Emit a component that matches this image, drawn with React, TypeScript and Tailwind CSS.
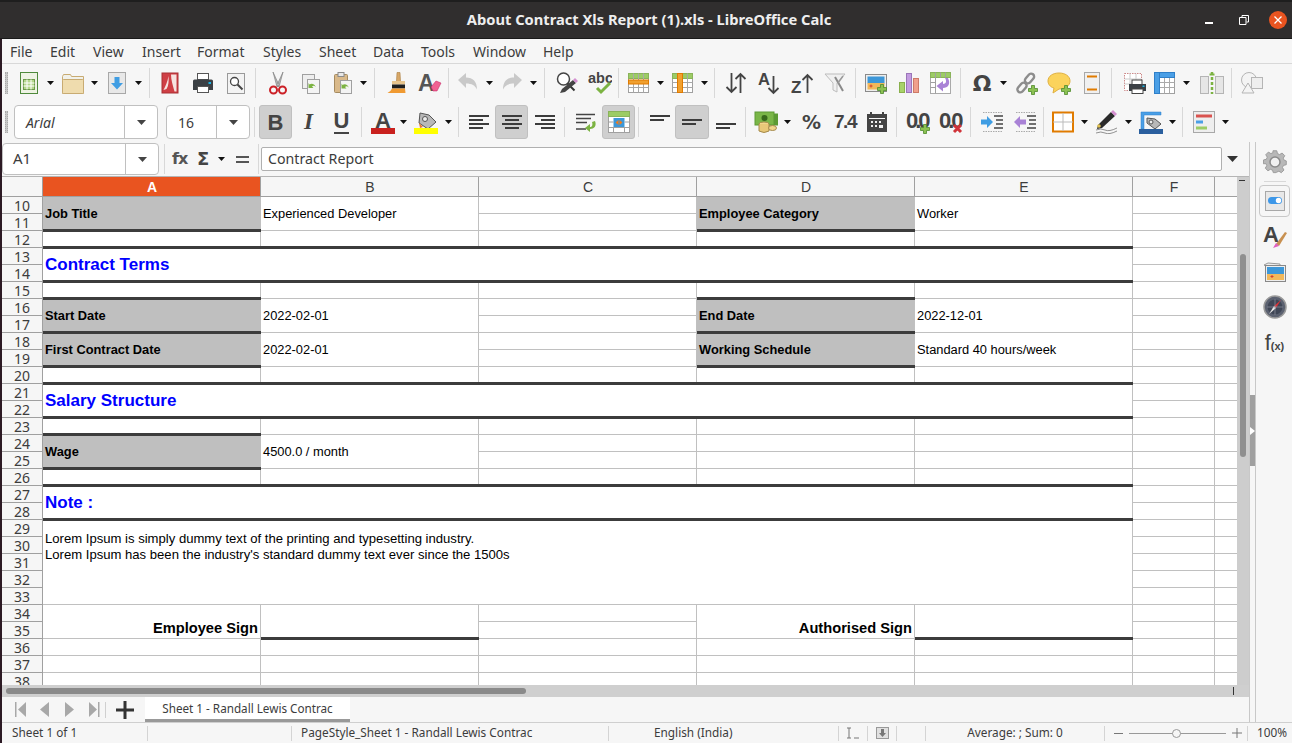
import type { ReactNode } from "react";

const LINE = "border-[#c0c0c0]";
const DARK = "#3c3c3c";

const Ico = ({ children, w = 24, h = 24 }: { children: ReactNode; w?: number; h?: number }) => (
  <svg width={w} height={h} viewBox={`0 0 ${w} ${h}`} className="shrink-0">
    {children}
  </svg>
);

const Plus = ({ x = 14, y = 14 }: { x?: number; y?: number }) => (
  <path
    transform={`translate(${x} ${y})`}
    d="M3.5 .5h3v3h3v3h-3v3h-3v-3h-3v-3h3z"
    fill="#8cc152"
    stroke="#4f8a2c"
    strokeWidth=".8"
  />
);

const GreenTable = ({ hl }: { hl?: "row" | "col" }) => (
  <>
    <rect x="1.5" y="2.5" width="20" height="19" fill="#fff" stroke="#a0a0a0" />
    <rect x="1.5" y="2.5" width="20" height="5" fill="#9ccc65" stroke="#8ab35a" />
    <path d="M1.5 11.5h20M1.5 16.5h20M6.5 2.5v19M11.5 2.5v19M16.5 2.5v19" stroke="#a8a8a8" fill="none" />
    {hl === "row" && <rect x="1.5" y="9" width="20" height="4" fill="#f0a030" stroke="#e07b00" />}
    {hl === "col" && <rect x="6.5" y="2.5" width="5" height="19" fill="#f0a030" stroke="#e07b00" />}
  </>
);

const Icons: Record<string, ReactNode> = {
  new: (
    <Ico>
      <rect x="3.5" y="1.5" width="17" height="21" fill="#eef3e4" stroke="#4f8a3c" />
      <rect x="6.5" y="8.5" width="11" height="10" fill="#b4d68c" stroke="#6c9a4a" />
      <path d="M6.5 12h11M6.5 15h11M10 8.5v10M14 8.5v10" stroke="#fff" fill="none" />
    </Ico>
  ),
  open: (
    <Ico>
      <path d="M1.5 5.5l1-2h7l1 2h12v17h-21z" fill="#f1f1ea" stroke="#c8ab72" />
      <rect x="1.5" y="8.5" width="21" height="14" rx="1" fill="#efdcae" stroke="#c8ab72" />
    </Ico>
  ),
  save: (
    <Ico>
      <rect x="3.5" y="1.5" width="17" height="21" fill="#e8e8e8" stroke="#a8a8a8" />
      <path d="M9.5 6h5v6h3.500L12 18.500 6 12h3.500z" fill="#3f9de3" />
    </Ico>
  ),
  pdf: (
    <Ico>
      <rect x="4" y="2" width="16" height="20" fill="#cf3f45" stroke="#a83034" />
      <path d="M13 3.500h5.500v17h-2C15 15 13 9 13 3.500zM5.500 19c2-4 4-8 5-14 .5 5 0 10-2 13z" fill="#f6e3e0" />
    </Ico>
  ),
  print: (
    <Ico>
      <rect x="6.500" y="2.500" width="11" height="6" fill="#fff" stroke="#555" />
      <path d="M3.500 8.500h17q1.500 0 1.500 1.500v9h-20v-9q0-1.500 1.500-1.500z" fill="#3b4045" />
      <rect x="6.500" y="15.500" width="11" height="6" fill="#fff" stroke="#555" />
      <rect x="17.500" y="11" width="2.500" height="2" fill="#19b5e8" />
    </Ico>
  ),
  preview: (
    <Ico>
      <rect x="3.500" y="2.500" width="17" height="20" fill="#f3f3f3" stroke="#9a9a9a" />
      <circle cx="10.500" cy="10.500" r="4" fill="#fff" stroke="#444" strokeWidth="1.300" />
      <path d="M13.500 13.500l5 5" stroke="#444" strokeWidth="2" />
    </Ico>
  ),
  cut: (
    <Ico>
      <path d="M7 1l6 13-2 2zM17 1L11 14l2 2z" fill="#b8b8b8" stroke="#777" strokeWidth=".6" />
      <circle cx="7.500" cy="19" r="3.500" fill="none" stroke="#cc2127" strokeWidth="2" />
      <circle cx="16.500" cy="19" r="3.500" fill="none" stroke="#cc2127" strokeWidth="2" />
    </Ico>
  ),
  copy: (
    <Ico>
      <rect x="3.500" y="3.500" width="12" height="14" fill="#eee" stroke="#a0a0a0" />
      <rect x="8.500" y="8.500" width="12" height="14" fill="#f4f4f4" stroke="#a0a0a0" />
      <path d="M16.500 15.500a4 4 0 0 0-6-2l-1-1.500v5h5l-1.500-1.500a2.500 2.500 0 0 1 3.500.5z" fill="#7cb342" />
    </Ico>
  ),
  paste: (
    <Ico>
      <rect x="3.500" y="3.500" width="13" height="18" rx="1" fill="#d9b98a" stroke="#a58a5f" />
      <rect x="7" y="1.500" width="6" height="4" fill="#e8e8e8" stroke="#8a8a8a" />
      <rect x="9.500" y="9.500" width="11" height="13" fill="#f4f4f4" stroke="#a0a0a0" />
      <path d="M17.500 16a4 4 0 0 0-6-2l-1-1.500v5h5l-1.500-1.500a2.500 2.500 0 0 1 3.500.5z" fill="#7cb342" />
    </Ico>
  ),
  brush: (
    <Ico>
      <path d="M12 1.500h3l.5 9h-4z" fill="#d8a868" stroke="#a87a3c" strokeWidth=".6" />
      <rect x="7" y="10" width="13" height="3.500" fill="#e8c48c" />
      <rect x="7" y="13.500" width="13" height="4" fill="#1f1f1f" />
      <path d="M7 17.500h13l.5 4.500h-18q3-1 4.500-4.500z" fill="#f09a32" />
    </Ico>
  ),
  clear: (
    <Ico>
      <text x="0" y="20" fontFamily="Liberation Sans" fontWeight="700" fontSize="23" fill="#555">A</text>
      <path d="M13 16l5-6 5 2-4 8h-4z" fill="#f06292" stroke="#c2185b" strokeWidth=".5" />
    </Ico>
  ),
  undo: (
    <Ico>
      <path d="M2 9l8-7v4.500c7 0 11 4 11 12-2-4-5-6-11-6V17z" fill="#c9c9c9" />
    </Ico>
  ),
  redo: (
    <Ico>
      <path d="M22 9l-8-7v4.500c-7 0-11 4-11 12 2-4 5-6 11-6V17z" fill="#c9c9c9" />
    </Ico>
  ),
  find: (
    <Ico>
      <circle cx="8.500" cy="8" r="6" fill="#fff" stroke="#444" strokeWidth="1.500" />
      <path d="M12.500 12.500l7 7" stroke="#333" strokeWidth="2" />
      <path d="M5 22l2-4 11-9 3 3-11 9z" fill="#444" />
      <path d="M18 9l2-2 3 3-2 2z" fill="#d48fd0" />
    </Ico>
  ),
  spell: (
    <Ico>
      <text x="0" y="12" fontFamily="Liberation Sans" fontWeight="700" fontSize="14.500" fill="#444">abc</text>
      <path d="M9 17l4 4 9-9" fill="none" stroke="#7cb342" strokeWidth="3" />
    </Ico>
  ),
  rowT: <Ico><GreenTable hl="row" /></Ico>,
  colT: <Ico><GreenTable hl="col" /></Ico>,
  sort: (
    <Ico>
      <path d="M7.500 2v19M2.500 16l5 5 5-5M16.500 22V3M11.500 8l5-5 5 5" fill="none" stroke="#444" strokeWidth="1.800" />
    </Ico>
  ),
  sortA: (
    <Ico>
      <text x="0" y="14" fontFamily="Liberation Sans" fontWeight="700" fontSize="16.500" fill="#444">A</text>
      <path d="M15.500 5v17M10.500 17l5 5 5-5" fill="none" stroke="#444" strokeWidth="1.800" />
    </Ico>
  ),
  sortZ: (
    <Ico>
      <text x="0" y="22" fontFamily="Liberation Sans" fontWeight="700" fontSize="17" fill="#444">Z</text>
      <path d="M16.500 22V4M11.500 9l5-5 5 5" fill="none" stroke="#444" strokeWidth="1.800" />
    </Ico>
  ),
  filter: (
    <Ico>
      <path d="M2 3h20l-8 9v9l-4-2v-7z" fill="#f0f0f0" stroke="#bdbdbd" />
      <path d="M12 6l8 14" stroke="#8a8a8a" strokeWidth="2" />
      <path d="M20 5l-5 7" stroke="#9a9a9a" strokeWidth="1.500" />
    </Ico>
  ),
  image: (
    <Ico>
      <rect x="1.500" y="3.500" width="21" height="17" fill="#eee" stroke="#8a8a8a" />
      <rect x="3.500" y="5.500" width="17" height="7" fill="#3d97d8" />
      <rect x="3.500" y="12" width="17" height="6.500" fill="#f2b85a" />
      <path d="M7 13.500v3M5.500 15h3" stroke="#d6402c" />
      <Plus x={13} y={13} />
    </Ico>
  ),
  chart: (
    <Ico>
      <rect x="2.500" y="11.500" width="5" height="10" fill="#a8d26a" stroke="#8ab04c" />
      <rect x="9.500" y="2.500" width="5" height="19" fill="#c39be0" stroke="#9a76b8" />
      <rect x="16.500" y="7.500" width="5" height="14" fill="#f0a08c" stroke="#cc7a68" />
    </Ico>
  ),
  pivot: (
    <Ico>
      <rect x="1.500" y="1.500" width="20" height="21" fill="#fff" stroke="#aaa" />
      <rect x="1.500" y="1.500" width="20" height="5" fill="#9ccc65" stroke="#8ab35a" />
      <path d="M6.500 1.500v21M1.500 11.500h5M1.500 16.500h5M11.500 1.500v5M16.500 1.500v5" stroke="#a0a0a0" />
      <path d="M19 7c3 6 0 10-5 10v3.500L7.500 15 14 10v3c3 0 4-3 2-6z" fill="#a982d6" />
    </Ico>
  ),
  omega: (
    <Ico>
      <text x="12" y="20" textAnchor="middle" fontFamily="DejaVu Sans" fontWeight="700" fontSize="22" fill="#444">Ω</text>
    </Ico>
  ),
  link: (
    <Ico>
      <g fill="none" stroke="#8d8d8d" strokeWidth="2.400">
        <rect x="12.500" y="2" width="6" height="11" rx="3" transform="rotate(40 15.500 7.500)" />
        <rect x="5" y="11" width="6" height="11" rx="3" transform="rotate(40 8 16.500)" />
      </g>
      <Plus x={14} y={14} />
    </Ico>
  ),
  comment: (
    <Ico>
      <path d="M12 2c6 0 11 3 11 8 0 5-5 8-11 8l-6 4 1-5c-4-1-6-4-6-7 0-5 5-8 11-8z" fill="#fbd35c" stroke="#e0b040" />
      <Plus x={14} y={14} />
    </Ico>
  ),
  header: (
    <Ico>
      <rect x="4.500" y="1.500" width="15" height="21" fill="#f0f0f0" stroke="#a8a8a8" />
      <rect x="7" y="4.500" width="10" height="2" fill="#e07b00" />
      <rect x="7" y="17.500" width="10" height="2" fill="#e07b00" />
    </Ico>
  ),
  printArea: (
    <Ico>
      <rect x="1.500" y="2.500" width="17" height="17" fill="#fff" stroke="#c88" strokeDasharray="1.500 1" />
      <path d="M1.500 8h17M1.500 13h17M7 2.500v17M13 2.500v17" stroke="#ccc" />
      <rect x="9" y="9" width="10" height="5" fill="#fff" stroke="#444" />
      <rect x="6" y="13" width="17" height="7" fill="#3b4045" />
      <rect x="9" y="18" width="11" height="4.500" fill="#fff" stroke="#444" />
      <rect x="19.500" y="14.500" width="2" height="1.500" fill="#19b5e8" />
    </Ico>
  ),
  freeze: (
    <Ico>
      <rect x="1.500" y="1.500" width="20" height="21" fill="#fff" stroke="#a0a0a0" />
      <path d="M11.500 6.500v16M16.500 6.500v16M6.500 11.500h15M6.500 16.500h15" stroke="#aaa" />
      <rect x="1.500" y="1.500" width="20" height="5" fill="#4a9fe6" stroke="#2f7fc8" />
      <rect x="1.500" y="1.500" width="5" height="21" fill="#4a9fe6" stroke="#2f7fc8" />
    </Ico>
  ),
  split: (
    <Ico>
      <rect x=".5" y="5.500" width="8" height="17" fill="#e6e6e6" stroke="#b5b5b5" />
      <rect x="15.500" y="5.500" width="8" height="17" fill="#e6e6e6" stroke="#b5b5b5" />
      <path d="M12 1v22" stroke="#7cb342" strokeWidth="2.500" strokeDasharray="3 2" />
      <path d="M9.500 3.500h5" stroke="#7cb342" strokeWidth="2" />
    </Ico>
  ),
  shapes: (
    <Ico>
      <circle cx="9" cy="9" r="7.500" fill="#f4f4f4" stroke="#b5b5b5" />
      <rect x="11.500" y="6.500" width="11" height="11" fill="#eee" stroke="#b5b5b5" />
      <path d="M8 12l6 10H2z" fill="#f4f4f4" stroke="#b5b5b5" />
    </Ico>
  ),
  fontColor: (
    <Ico>
      <text x="12" y="18" textAnchor="middle" fontFamily="Liberation Sans" fontWeight="700" fontSize="22" fill="#444">A</text>
      <rect x="0" y="18" width="24" height="6" fill="#c9211e" />
    </Ico>
  ),
  highlight: (
    <Ico>
      <path d="M6 3l9 2 7 7-8 7-9-6z" fill="#b8b8b8" stroke="#555" />
      <circle cx="11" cy="9" r="2.500" fill="#eee" stroke="#555" />
      <path d="M5 13l4 4-3 1z" fill="#e8762c" />
      <rect x="0" y="18" width="24" height="6" fill="#ffff00" />
    </Ico>
  ),
  wrap: (
    <Ico>
      <path d="M2 4.500h19M2 8.500h15M2 12.500h11M2 19h10" stroke="#444" strokeWidth="1.600" />
      <path d="M21 11c2 5-1 8-5 8v3l-5-4 5-4v3c2 0 3-2 2-5z" fill="#7cb342" />
    </Ico>
  ),
  merge: (
    <Ico>
      <rect x="1.500" y="1.500" width="21" height="21" fill="#fff" stroke="#a0a0a0" />
      <rect x="1.500" y="1.500" width="21" height="5" fill="#9ccc65" stroke="#8ab35a" />
      <rect x="6.500" y="8" width="11" height="9" fill="#3d97d8" />
      <path d="M11.500 10v5l-3-2.500zM12.500 10v5l3-2.500z" fill="#f07c1c" />
      <path d="M1.500 12h5M17.500 12h5M1.500 17.500h21M6.500 17.500v5M17.500 17.500v5" stroke="#a0a0a0" />
    </Ico>
  ),
  money: (
    <Ico>
      <rect x="6" y="3.500" width="18" height="12" fill="#5c9a34" />
      <rect x="1" y="2" width="19" height="13" fill="#7ab648" stroke="#5c9a34" />
      <circle cx="10.500" cy="8" r="3" fill="#38691c" />
      <ellipse cx="10" cy="14" rx="5" ry="2" fill="#f1d58c" stroke="#a58a4c" />
      <path d="M5 14v7q5 3 10 0v-7" fill="#e8c878" stroke="#a58a4c" />
      <ellipse cx="18.500" cy="18" rx="4" ry="2.500" fill="#f1d58c" stroke="#a58a4c" />
    </Ico>
  ),
  date: (
    <Ico>
      <rect x="2" y="4" width="20" height="18" fill="#444" />
      <rect x="5" y="2" width="2" height="3" fill="#444" />
      <rect x="17" y="2" width="2" height="3" fill="#444" />
      <rect x="4" y="8" width="16" height="1" fill="#f6f6f6" />
      <path d="M6 11h2v2H6zM10 11h2v2h-2zM14 11h2v2h-2zM14 15h4v3h-4zM6 15h2v2H6zM10 15h2v2h-2z" fill="#f0f0f0" />
    </Ico>
  ),
  addDec: (
    <Ico>
      <text x="0" y="18" fontFamily="Liberation Sans" fontWeight="700" fontSize="22" letterSpacing="-3" fill="#444">0.0</text>
      <Plus x={14} y={14} />
    </Ico>
  ),
  delDec: (
    <Ico>
      <text x="0" y="18" fontFamily="Liberation Sans" fontWeight="700" fontSize="22" letterSpacing="-3" fill="#444">0.0</text>
      <path d="M15 15l7 7M22 15l-7 7" stroke="#d0343a" strokeWidth="3" />
    </Ico>
  ),
  indent: (
    <Ico>
      <path d="M14 6h9M16 10h7M16 14h7M14 18h9" stroke="#444" strokeWidth="1.500" />
      <path d="M3 2.500h20M3 21.500h20" stroke="#aaa" strokeDasharray="1.500 1" />
      <path d="M1 9.500h6V6l6 6-6 6v-3.500H1z" fill="#3f9de3" />
    </Ico>
  ),
  outdent: (
    <Ico>
      <path d="M14 6h9M16 10h7M16 14h7M14 18h9" stroke="#444" strokeWidth="1.500" />
      <path d="M3 2.500h20M3 21.500h20" stroke="#aaa" strokeDasharray="1.500 1" />
      <path d="M13 9.500H7V6l-6 6 6 6v-3.500h6z" fill="#a982d6" />
    </Ico>
  ),
  borders: (
    <Ico>
      <rect x="2" y="2.500" width="20" height="19" fill="#fff" stroke="#e07b00" strokeWidth="2" />
      <path d="M12 3v18M2 12h20" stroke="#bbb" />
    </Ico>
  ),
  lineStyle: (
    <Ico>
      <path d="M3 15L16 2l4 4L7 18l-5 1z" fill="#2a2a2a" />
      <path d="M16 2l2-2 4 4-2 2z" fill="#d48fd0" />
      <circle cx="4" cy="16" r="1.800" fill="#e0c050" />
      <path d="M1 20q5-2 9 0t12-2M1 23q5-2 9 0t12-2" fill="none" stroke="#777" strokeWidth=".8" />
    </Ico>
  ),
  borderColor: (
    <Ico>
      <path d="M2 19V2h20v3H5v14z" fill="#4a9fe6" stroke="#2f7fc8" strokeWidth=".5" />
      <path d="M8 8l8 1 6 5-6 5-8-6z" fill="#b8b8b8" stroke="#555" />
      <circle cx="12" cy="12" r="2" fill="#eee" stroke="#555" />
      <rect x="0" y="19" width="24" height="5" fill="#2a5f9e" />
    </Ico>
  ),
  cond: (
    <Ico>
      <rect x="1.500" y="1.500" width="21" height="21" fill="#eee" stroke="#a8a8a8" />
      <rect x="4" y="4.500" width="16" height="3" fill="#d9534f" />
      <rect x="4" y="10.500" width="7" height="3" fill="#4a9fe6" />
      <rect x="4" y="16.500" width="11" height="3" fill="#9ccc65" />
    </Ico>
  ),
};

const AlignH = ({ kind }: { kind: "l" | "c" | "r" }) => {
  const rows: [number, number][] =
    kind === "l"
      ? [[2, 20], [2, 14], [2, 20], [2, 14]]
      : kind === "c"
        ? [[2, 20], [5, 14], [2, 20], [5, 14]]
        : [[2, 20], [8, 14], [2, 20], [8, 14]];
  return (
    <Ico>
      {rows.map(([x, w], i) => (
        <rect key={i} x={x} y={5 + i * 4} width={w} height="2" fill={DARK} />
      ))}
    </Ico>
  );
};

const AlignV = ({ y }: { y: number }) => (
  <Ico>
    <rect x="2" y={y} width="20" height="2" fill={DARK} />
    <rect x="2" y={y + 4} width="14" height="2" fill={DARK} />
  </Ico>
);

const Arrow = ({ cls = "w-[11px]" }: { cls?: string }) => (
  <div className={`${cls} flex shrink-0 justify-center`}>
    <svg width="7" height="4" viewBox="0 0 7 4">
      <path d="M0 0h7L3.500 4z" fill="#111" />
    </svg>
  </div>
);

const Sep = ({ cls = "mx-[3px]" }: { cls?: string }) => <div className={`${cls} h-[30px] w-px shrink-0 bg-[#d8d8d8]`} />;

const Btn = ({ children, active, cls = "w-[33px]" }: { children: ReactNode; active?: boolean; cls?: string }) => (
  <div
    className={`${cls} flex h-[34px] shrink-0 items-center justify-center rounded-[3px] ${
      active ? "border border-[#c0c0c0] bg-[#cfcfcf]" : ""
    }`}
  >
    {children}
  </div>
);

const Grip = () => (
  <div className="ml-[3px] h-[22px] w-[3px] shrink-0 border-x border-dotted border-[#a8a8a8] bg-[#c8c8c8]" />
);

const Combo = ({ text, cls, italic }: { text: string; cls: string; italic?: boolean }) => (
  <div className={`${cls} flex h-[34px] shrink-0 rounded-[4px] border border-[#c0c0c0] bg-white`}>
    <div className={`flex flex-1 items-center text-[14px] text-[#3c3c3c] ${italic ? "pl-[11px] italic" : "pl-[11px]"}`}>
      {text}
    </div>
    <div className="flex w-[33px] items-center justify-center border-l border-[#c0c0c0]">
      <svg width="9" height="5" viewBox="0 0 9 5">
        <path d="M0 0h9L4.500 5z" fill="#444" />
      </svg>
    </div>
  </div>
);

const Toolbar1 = () => (
  <div className="flex h-[38px] items-center">
    <Grip />
    <div className="w-[4px] shrink-0" />
    <Btn>{Icons.new}</Btn>
    <Arrow />
    <Btn>{Icons.open}</Btn>
    <Arrow />
    <Btn>{Icons.save}</Btn>
    <Arrow />
    <Sep cls="ml-[5px] mr-[3px]" />
    <Btn>{Icons.pdf}</Btn>
    <Btn>{Icons.print}</Btn>
    <Btn>{Icons.preview}</Btn>
    <Sep cls="ml-[3px] mr-[5px]" />
    <Btn>{Icons.cut}</Btn>
    <Btn>{Icons.copy}</Btn>
    <Btn cls="w-[31px]">{Icons.paste}</Btn>
    <Arrow />
    <Sep cls="mx-[5px]" />
    <Btn cls="w-[33px]">{Icons.brush}</Btn>
    <Btn cls="w-[33px]">{Icons.clear}</Btn>
    <Sep cls="ml-[2px] mr-[3px]" />
    <Btn cls="w-[32px]">{Icons.undo}</Btn>
    <Arrow />
    <Btn>{Icons.redo}</Btn>
    <Arrow />
    <Sep cls="mx-[5px]" />
    <Btn>{Icons.find}</Btn>
    <Btn>{Icons.spell}</Btn>
    <Sep cls="ml-[2px] mr-[3px]" />
    <Btn>{Icons.rowT}</Btn>
    <Arrow />
    <Btn>{Icons.colT}</Btn>
    <Arrow />
    <Sep cls="ml-[4px] mr-[3px]" />
    <Btn cls="w-[35px]">{Icons.sort}</Btn>
    <Btn>{Icons.sortA}</Btn>
    <Btn>{Icons.sortZ}</Btn>
    <Btn cls="w-[32px]">{Icons.filter}</Btn>
    <Sep cls="ml-[4px] mr-[3px]" />
    <Btn>{Icons.image}</Btn>
    <Btn>{Icons.chart}</Btn>
    <Btn cls="w-[32px]">{Icons.pivot}</Btn>
    <Sep cls="ml-[3px] mr-[5px]" />
    <Btn cls="w-[32px]">{Icons.omega}</Btn>
    <Arrow />
    <Btn>{Icons.link}</Btn>
    <Btn>{Icons.comment}</Btn>
    <Btn>{Icons.header}</Btn>
    <Sep cls="ml-[3px] mr-[5px]" />
    <Btn cls="w-[35px]">{Icons.printArea}</Btn>
    <Btn cls="w-[26px]">{Icons.freeze}</Btn>
    <Arrow cls="w-[17px]" />
    <Btn cls="w-[33px]">{Icons.split}</Btn>
    <Sep cls="mx-[3px]" />
    <Btn>{Icons.shapes}</Btn>
  </div>
);

const Toolbar2 = () => (
  <div className="flex h-[40px] items-center">
    <Grip />
    <div className="w-[6px] shrink-0" />
    <Combo text="Arial" cls="w-[144px]" italic />
    <div className="w-[8px] shrink-0" />
    <Combo text="16" cls="w-[84px]" />
    <Sep cls="mx-[4px]" />
    <Btn active>
      <span className="font-['Liberation_Sans'] text-[22px] font-bold text-[#444]">B</span>
    </Btn>
    <Btn cls="w-[33px]">
      <span className="font-['Liberation_Serif'] text-[23px] font-bold italic text-[#444]">I</span>
    </Btn>
    <Btn>
      <span className="border-b-[2px] border-[#444] font-['Liberation_Sans'] text-[22px] leading-[22px] font-bold text-[#444]">
        U
      </span>
    </Btn>
    <Sep cls="ml-[3px] mr-[5px]" />
    <Btn cls="w-[31px]">{Icons.fontColor}</Btn>
    <Arrow />
    <Btn cls="w-[34px]">{Icons.highlight}</Btn>
    <Arrow />
    <Sep cls="ml-[4px] mr-[3px]" />
    <Btn>
      <AlignH kind="l" />
    </Btn>
    <Btn active>
      <AlignH kind="c" />
    </Btn>
    <Btn>
      <AlignH kind="r" />
    </Btn>
    <Sep cls="ml-[3px] mr-[5px]" />
    <Btn cls="w-[32px]">{Icons.wrap}</Btn>
    <Btn active>{Icons.merge}</Btn>
    <Sep cls="ml-[3px] mr-[5px]" />
    <Btn cls="w-[31px]">
      <AlignV y={5} />
    </Btn>
    <Btn active cls="w-[34px]">
      <AlignV y={9} />
    </Btn>
    <Btn>
      <AlignV y={13} />
    </Btn>
    <Sep cls="ml-[3px] mr-[4px]" />
    <Btn cls="w-[32px]">{Icons.money}</Btn>
    <Arrow />
    <Btn cls="w-[36px]">
      <span className="font-['DejaVu_Sans'] text-[19px] font-bold tracking-[-1px] text-[#444]">%</span>
    </Btn>
    <Btn cls="w-[32px]">
      <span className="font-['Liberation_Sans'] text-[19px] font-bold tracking-[-1.500px] text-[#444]">7.4</span>
    </Btn>
    <Btn cls="w-[32px]">{Icons.date}</Btn>
    <Sep cls="ml-[3px] mr-[4px]" />
    <Btn>{Icons.addDec}</Btn>
    <Btn>{Icons.delDec}</Btn>
    <Sep cls="ml-[3px] mr-[4px]" />
    <Btn>{Icons.indent}</Btn>
    <Btn>{Icons.outdent}</Btn>
    <Sep cls="mx-[2px]" />
    <Btn>{Icons.borders}</Btn>
    <Arrow />
    <Btn>{Icons.lineStyle}</Btn>
    <Arrow />
    <Btn>{Icons.borderColor}</Btn>
    <Arrow />
    <Sep cls="mx-[4px]" />
    <Btn>{Icons.cond}</Btn>
    <Arrow />
  </div>
);

const FormulaBar = () => (
  <div className="flex h-[35px] shrink-0 items-center border-b border-[#b5b5b5]">
    <div className="flex h-[32px] w-[157px] shrink-0 rounded-[4px] border border-[#c0c0c0] bg-white">
      <div className="flex flex-1 items-center pl-[10px] pb-[1px] text-[15px] text-[#3c3c3c]">A1</div>
      <div className="flex w-[33px] items-center justify-center border-l border-[#c0c0c0]">
        <svg width="9" height="5" viewBox="0 0 9 5">
          <path d="M0 0h9L4.500 5z" fill="#444" />
        </svg>
      </div>
    </div>
    <Sep cls="ml-[5px] mr-[7px]" />
    <span className="w-[18px] font-['DejaVu_Sans'] text-[16px] font-bold tracking-[-1px] text-[#555]">fx</span>
    <span className="ml-[7px] w-[12px] font-['DejaVu_Sans'] text-[18px] leading-none font-bold text-[#444]">Σ</span>
    <Arrow cls="ml-[7px] w-[10px]" />
    <div className="ml-[10px] w-[13px] space-y-[3px]">
      <div className="h-[2px] bg-[#555]" />
      <div className="h-[2px] bg-[#555]" />
    </div>
    <Sep cls="ml-[9px] mr-[2px]" />
    <div className="flex h-[24px] w-[961px] items-center rounded-[2px] border border-[#b0b0b0] bg-white pb-[1px] pl-[6px] text-[14.200px] text-[#3c3c3c]">
      Contract Report
    </div>
    <div className="flex w-[20px] justify-center">
      <svg width="11" height="6" viewBox="0 0 11 6">
        <path d="M0 0h11L5.500 6z" fill="#333" />
      </svg>
    </div>
  </div>
);

type CellDef = { c?: string; t?: ReactNode; k?: "label" | "head" | "plain" | "sign" | "note"; thick?: boolean };

const kinds: Record<string, string> = {
  label: "items-center bg-[#bfbfbf] pl-[2px] font-bold",
  head: "items-center pl-[2px] text-[17px] font-bold text-[#0000ff]",
  plain: "items-center pl-[2px]",
  sign: "items-end justify-end pr-[2px] pb-[2px] text-[14.670px] leading-[16px] font-bold",
  note: "items-start pt-[11px] pl-[2px] text-[13.100px] leading-[16px]",
};

const Cell = ({ c = "", t, k = "plain", thick }: CellDef) => (
  <div className={`relative flex border-r border-b ${LINE} ${kinds[k]} ${c}`}>
    {t && <div>{t}</div>}
    {thick && <div className="absolute right-[-1px] bottom-[-2px] left-0 z-10 h-[3px] bg-[#3c3c3c]" />}
  </div>
);

const two = "row-span-2";
const five = "col-span-5 row-span-2";

const empties = (thickAll = false): CellDef[] => Array.from({ length: 5 }, () => ({ thick: thickAll }));

// rows 10 to 38, only what differs from an empty row is written out
const rowDefs: Record<number, CellDef[]> = {
  10: [
    { c: two, k: "label", t: "Job Title", thick: true },
    { c: two, t: "Experienced Developer" },
    {},
    { c: two, k: "label", t: "Employee Category", thick: true },
    { c: two, t: "Worker" },
  ],
  11: [{}],
  12: empties(true),
  13: [{ c: five, k: "head", t: "Contract Terms", thick: true }],
  14: [],
  15: [{ thick: true }, {}, {}, { thick: true }, {}],
  16: [
    { c: two, k: "label", t: "Start Date", thick: true },
    { c: two, t: "2022-02-01" },
    {},
    { c: two, k: "label", t: "End Date", thick: true },
    { c: two, t: "2022-12-01" },
  ],
  17: [{}],
  18: [
    { c: two, k: "label", t: "First Contract Date", thick: true },
    { c: two, t: "2022-02-01" },
    {},
    { c: two, k: "label", t: "Working Schedule", thick: true },
    { c: two, t: "Standard 40 hours/week" },
  ],
  19: [{}],
  20: empties(true),
  21: [{ c: five, k: "head", t: "Salary Structure", thick: true }],
  22: [],
  23: [{ thick: true }, {}, {}, {}, {}],
  24: [{ c: two, k: "label", t: "Wage", thick: true }, { c: two, t: "4500.0 / month" }, {}, {}, {}],
  25: [{}, {}, {}],
  26: empties(true),
  27: [{ c: five, k: "head", t: "Note :", thick: true }],
  28: [],
  29: [
    {
      c: "col-span-5 row-span-5",
      k: "note",
      t: (
        <>
          Lorem Ipsum is simply dummy text of the printing and typesetting industry.
          <br />
          Lorem Ipsum has been the industry's standard dummy text ever since the 1500s
        </>
      ),
    },
  ],
  30: [],
  31: [],
  32: [],
  33: [],
  34: [
    { c: two, k: "sign", t: "Employee Sign" },
    { c: two, thick: true },
    {},
    { c: two, k: "sign", t: "Authorised Sign" },
    { c: two, thick: true },
  ],
  35: [{}],
};

const ColHead = ({ t, active }: { t: string; active?: boolean }) => (
  <div
    className={`flex items-center justify-center border-r border-b border-[#a0a0a0] pt-[1px] pl-[1px] text-[14px] ${
      active ? "bg-[#e95420] font-bold text-white" : "bg-[#f6f6f6] text-[#3c3c3c]"
    }`}
  >
    {t}
  </div>
);

const Row = ({ n }: { n: number }) => {
  const cells = rowDefs[n] ?? empties();
  return (
    <>
      <div className="flex items-center justify-center border-r border-b border-[#a0a0a0] bg-[#f6f6f6] pt-[2px] font-['Noto_Sans'] text-[14px] leading-none text-[#3c3c3c]">
        {n}
      </div>
      {cells.map((d, i) => (
        <Cell key={i} {...d} />
      ))}
      <Cell />
      <Cell c="border-r-0" />
    </>
  );
};

const Sheet = () => {
  const rows = Array.from({ length: 29 }, (_, i) => i + 10);
  return (
    <div className="grid flex-1 grid-cols-[41px_repeat(5,218px)_82px_23px] grid-rows-[20px_repeat(29,17px)] overflow-hidden bg-white font-['Liberation_Sans'] text-[12.850px] text-black">
      <div className="border-r border-b border-[#a0a0a0] bg-[#f6f6f6]" />
      {["A", "B", "C", "D", "E", "F", ""].map((c) => (
        <ColHead key={c} t={c} active={c === "A"} />
      ))}
      {rows.map((n) => (
        <Row key={n} n={n} />
      ))}
    </div>
  );
};

const NavTri = ({ dir, bar }: { dir: "l" | "r"; bar?: boolean }) => (
  <svg width="12" height="15" viewBox="0 0 12 15" className="shrink-0">
    {dir === "l" ? <path d={bar ? "M11 0v15L3 7.500z" : "M10 0v15L1 7.500z"} fill="#a8a8a8" /> : <path d={bar ? "M1 0v15l8-7.500z" : "M2 0v15l9-7.500z"} fill="#a8a8a8" />}
    {bar && <rect x={dir === "l" ? 0 : 10} y="0" width="1.500" height="15" fill="#a8a8a8" />}
  </svg>
);

const Tabs = () => (
  <div className="flex h-[25px] items-center">
    <div className="flex w-[143px] items-center pl-[13px]">
      <NavTri dir="l" bar />
      <div className="w-[12px]" />
      <NavTri dir="l" />
      <div className="w-[12px]" />
      <NavTri dir="r" />
      <div className="w-[13px]" />
      <NavTri dir="r" bar />
      <div className="ml-[5px] h-[16px] w-px bg-[#d0d0d0]" />
      <svg width="18" height="18" viewBox="0 0 18 18" className="ml-[10px] shrink-0">
        <path d="M7.500 0h3v7.500H18v3h-7.500V18h-3v-7.500H0v-3h7.500z" fill="#333" />
      </svg>
    </div>
    <div className="flex h-[25px] w-[205px] items-center justify-center border-b-[3px] border-[#999] bg-white pt-[1px] text-[11.700px] text-[#3c3c3c]">
      Sheet 1 - Randall Lewis Contrac
    </div>
  </div>
);

const StatCell = ({ cls, children }: { cls: string; children?: ReactNode }) => (
  <div className={`${cls} flex h-[15px] shrink-0 items-center border-r border-[#d4d4d4]`}>{children}</div>
);

const StatusBar = () => (
  <div className="flex h-[21px] shrink-0 items-center border-t border-[#cfcfcf] text-[11.800px] text-[#3c3c3c]">
    <StatCell cls="w-[146px] pl-[10px]">Sheet 1 of 1</StatCell>
    <StatCell cls="w-[144px]" />
    <StatCell cls="w-[317px] pl-[9px]">PageStyle_Sheet 1 - Randall Lewis Contrac</StatCell>
    <StatCell cls="w-[230px] pl-[45px]">English (India)</StatCell>
    <StatCell cls="w-[29px] justify-center">
      <svg width="14" height="12" viewBox="0 0 14 12">
        <path d="M1 1h4M1 11h4M3 1v10M8 11h5" stroke="#777" fill="none" />
      </svg>
    </StatCell>
    <StatCell cls="w-[29px] justify-center">
      <svg width="13" height="12" viewBox="0 0 13 12">
        <rect x=".5" y=".5" width="12" height="11" fill="#e0e0e0" stroke="#999" />
        <path d="M5 2h3v4h2l-3.500 4L3 6h2z" fill="#777" />
      </svg>
    </StatCell>
    <StatCell cls="w-[29px]" />
    <StatCell cls="w-[179px] justify-center">Average: ; Sum: 0</StatCell>
    <StatCell cls="w-[143px] gap-[6px] pl-[9px]">
      <div className="h-px w-[9px] bg-[#777]" />
      <div className="relative h-px w-[97px] bg-[#999]">
        <div className="absolute top-[-4px] left-[43px] h-[9px] w-[9px] rounded-full border border-[#999] bg-[#f6f6f6]" />
      </div>
      <svg width="10" height="10" viewBox="0 0 10 10">
        <path d="M0 5h10M5 0v10" stroke="#777" />
      </svg>
    </StatCell>
    <div className="pl-[9px]">100%</div>
  </div>
);

const Sidebar = () => (
  <div className="flex w-[37px] shrink-0 flex-col items-center pt-[8px]">
    <svg width="24" height="24" viewBox="0 0 24 24">
      <path
        d="M10 1h4l.7 3 2.300 1 2.600-1.600 2.800 2.800L20.800 8.800l1 2.200 2.200.7v4l-3 .7-1 2.300 1.600 2.600-2.800 2.800-2.600-1.600-2.200 1L13.300 24h-3l-.7-2.500-2.300-1-2.600 1.600-2.800-2.800 1.600-2.600-1-2.200L0 14.700v-4l3-.7 1-2.300L2.400 5.200l2.800-2.800 2.600 1.600 2.200-1z"
        transform="scale(.95) translate(.5 -.2)"
        fill="#b8b8b8"
        stroke="#9a9a9a"
      />
      <circle cx="12" cy="12" r="5" fill="#f0f0f0" stroke="#8a8a8a" strokeWidth="1.500" />
    </svg>
    <div className="mt-[7px] h-px w-[22px] bg-[#d8d8d8]" />
    <div className="mt-[3px] flex h-[32px] w-[31px] items-center justify-center rounded-[4px] border border-[#c8c8c8]">
      <svg width="20" height="20" viewBox="0 0 20 20">
        <rect x=".5" y=".5" width="19" height="19" fill="#e8e8e8" stroke="#a8a8a8" />
        <rect x="3" y="6" width="14" height="7" rx="3.500" fill="#3d97e8" />
        <circle cx="13.500" cy="9.500" r="2.700" fill="#fff" />
      </svg>
    </div>
    <svg width="24" height="24" viewBox="0 0 24 24" className="mt-[7px]">
      <text x="0" y="18" fontFamily="Liberation Sans" fontWeight="700" fontSize="22" fill="#444">A</text>
      <path d="M13 20l9-12 2 1-8 13z" fill="#c89050" />
      <path d="M10 24l3-5 3 3z" fill="#e060c0" />
    </svg>
    <svg width="24" height="24" viewBox="0 0 24 24" className="mt-[12px]">
      <path d="M1 5l4-2 12 1v2L4 7z" fill="#eee" stroke="#999" />
      <rect x="2.500" y="5.500" width="20" height="16" fill="#eee" stroke="#888" />
      <rect x="4" y="7" width="17" height="7" fill="#3d97d8" />
      <rect x="4" y="14" width="17" height="6" fill="#f2b85a" />
      <path d="M9 15v3M7.500 16.500h3" stroke="#d6402c" />
    </svg>
    <svg width="24" height="24" viewBox="0 0 24 24" className="mt-[11px]">
      <circle cx="12" cy="12" r="11" fill="#5b6170" stroke="#9a9a9a" strokeWidth="1.500" />
      <circle cx="12" cy="12" r="7.500" fill="#3f4656" />
      <path d="M18 5l-5 8-2-2z" fill="#d8343a" />
      <path d="M6 19l5-8 2 2z" fill="#e8e8e8" />
      <path d="M4 12h16M12 4v16" stroke="#9aa0ac" strokeWidth=".6" />
    </svg>
    <div className="mt-[13px] flex h-[24px] items-baseline font-['Liberation_Sans'] text-[#444]">
      <span className="text-[22px] leading-none">f</span>
      <span className="text-[11px] leading-none font-bold">(x)</span>
    </div>
  </div>
);

export default function App() {
  const menu: [string, string][] = [
    ["File", "w-[40px]"],
    ["Edit", "w-[43px]"],
    ["View", "w-[49px]"],
    ["Insert", "w-[55px]"],
    ["Format", "w-[66px]"],
    ["Styles", "w-[56px]"],
    ["Sheet", "w-[54px]"],
    ["Data", "w-[48px]"],
    ["Tools", "w-[52px]"],
    ["Window", "w-[70px]"],
    ["Help", "w-[50px]"],
  ];
  return (
    <div className="flex h-[743px] w-[1292px] flex-col overflow-hidden bg-[#f6f6f6] font-['Noto_Sans',sans-serif]">
      <div className="relative flex h-[39px] shrink-0 items-center justify-center border-t-2 border-b border-t-[#1e1e1e] border-b-[#1a1a1a] bg-[#302e2e] text-[14.700px] font-bold text-[#eeeeee]">
        <span className="mt-[-1px] ml-[6px]">About Contract Xls Report (1).xls - LibreOffice Calc</span>
        <div className="absolute top-[9px] right-[5px] flex items-center">
          <div className="mr-[26px] h-[2px] w-[8px] translate-y-[3px] bg-white" />
          <svg width="10" height="10" viewBox="0 0 10 10" className="mr-[20px]">
            <path d="M3 2.500V.5h6.500V7H7.500M.5 2.500H7V9.500H.5z" fill="none" stroke="#fff" />
          </svg>
          <div className="flex h-[18px] w-[18px] items-center justify-center rounded-full bg-[#e95420]">
            <svg width="8" height="8" viewBox="0 0 8 8">
              <path d="M.5 .5l7 7M7.500 .5l-7 7" stroke="#fff" strokeWidth="1.300" />
            </svg>
          </div>
        </div>
      </div>

      <div className="flex min-h-0 flex-1 border-l-2 border-[#2c1a24]">
        <div className="flex min-w-0 flex-1 flex-col">
          <div className="flex h-[25px] shrink-0 items-center border-b border-[#d8d8d8] pl-[8px] text-[14px] text-[#3c3c3c]">
            {menu.map(([m, w]) => (
              <div key={m} className={w}>
                {m}
              </div>
            ))}
          </div>
          <Toolbar1 />
          <Toolbar2 />

          <div className="flex min-h-0 flex-1">
            <div className="flex w-[1247px] shrink-0 flex-col">
              <FormulaBar />
              <div className="flex h-[508px] shrink-0">
                <Sheet />
                <div className="relative w-[12px] shrink-0 bg-[#cdcdcd]">
                  <div className="absolute top-[3px] left-[2px] h-px w-[6px] bg-[#333]" />
                  <div className="absolute top-[77px] left-[3px] h-[203px] w-[6px] rounded-[3px] bg-[#8f8f8f]" />
                </div>
              </div>
              <div className="relative h-[12px] shrink-0 bg-[#cfcfcf]">
                <div className="absolute top-[3px] left-[4px] h-[6px] w-[520px] rounded-[3px] bg-[#8a8a8a]" />
                <div className="absolute top-[2px] right-[15px] h-[8px] w-[1px] bg-[#333]" />
              </div>
              <Tabs />
            </div>
            <div className="relative w-[7px] shrink-0 border-x border-[#c8c8c8]">
              <div className="absolute top-[253px] left-0 h-[71px] w-[5px] bg-[#a0a0a0]" />
              <svg width="5" height="8" viewBox="0 0 5 8" className="absolute top-[285px] left-0">
                <path d="M0 0l5 4-5 4z" fill="#fff" />
              </svg>
            </div>
            <Sidebar />
          </div>

          <StatusBar />
        </div>
      </div>
    </div>
  );
}
